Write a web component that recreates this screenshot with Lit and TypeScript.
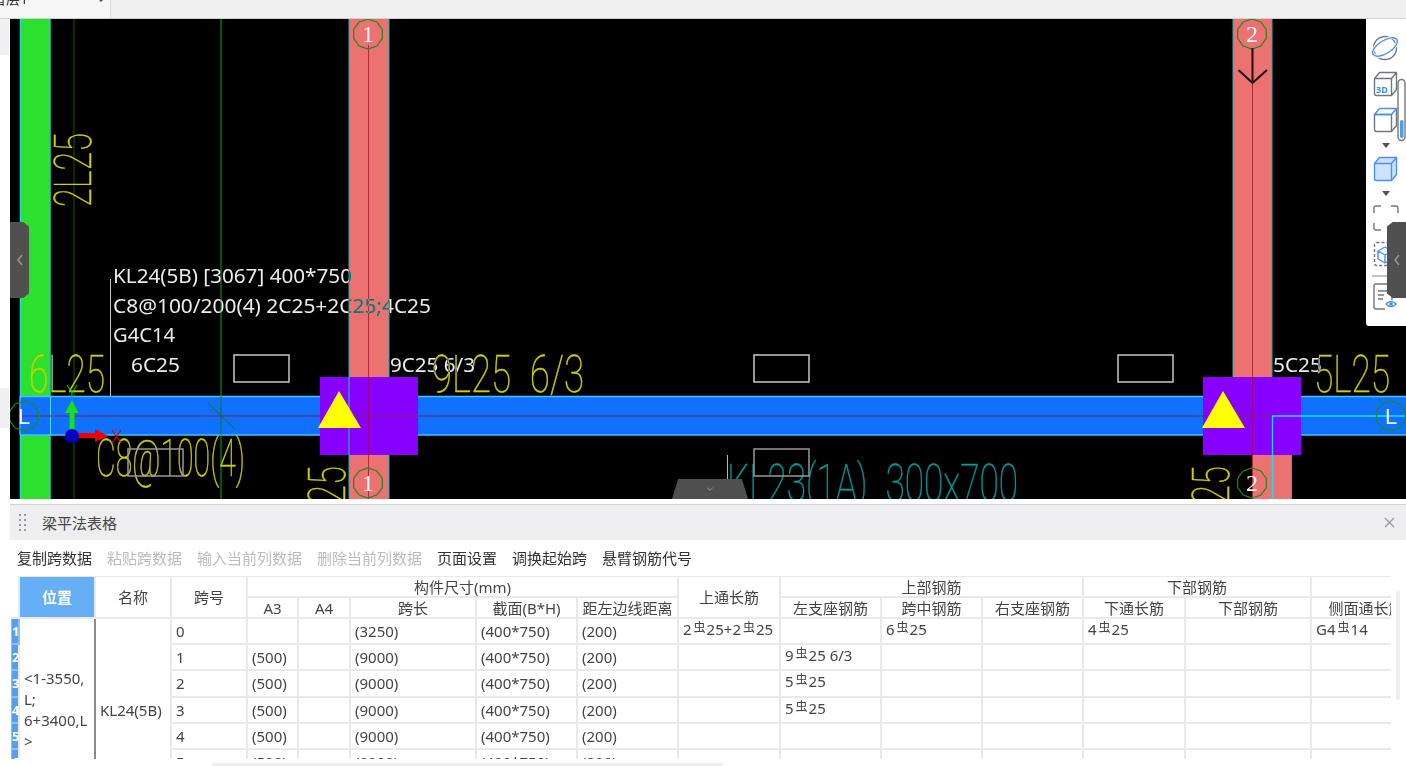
import { css, html, svg, LitElement } from "lit";
import { customElement } from "lit/decorators.js";

const REBAR = "虫";

const decagon = (cx: number, cy: number, r: number): string =>
  Array.from({ length: 10 }, (_, i) => {
    const a = (Math.PI / 5) * i + Math.PI / 10;
    return `${(cx + r * Math.cos(a)).toFixed(1)},${(cy + r * Math.sin(a)).toFixed(1)}`;
  }).join(" ");

const AXES = [
  { x: 368, y: 34, label: "1", serif: true },
  { x: 368, y: 483, label: "1", serif: true },
  { x: 1252, y: 34, label: "2", serif: true },
  { x: 1252, y: 483, label: "2", serif: true },
  { x: 24, y: 416, label: "L", serif: false },
  { x: 1391, y: 416, label: "L", serif: false },
];

const OPENINGS = [
  [234, 355],
  [754, 355],
  [1118, 355],
  [754, 449],
  [128, 449],
];

const NOTES = [
  { x: 113, y: 283, w: 239, t: "KL24(5B) [3067] 400*750" },
  { x: 113, y: 313, w: 318, t: "C8@100/200(4) 2C25+2C25;4C25" },
  { x: 113, y: 342, w: 62, t: "G4C14" },
  { x: 131, y: 372, w: 49, t: "6C25" },
  { x: 390, y: 372, w: 85, t: "9C25 6/3" },
  { x: 1273, y: 372, w: 49, t: "5C25" },
];

const MARKS = [
  { x: 29, y: 392, w: 76, t: "6L25" },
  { x: 96, y: 476, w: 149, t: "C8@100(4)" },
  { x: 432, y: 392, w: 152, t: "9L25 6/3" },
  { x: 1314, y: 392, w: 76, t: "5L25" },
];

const SIDE_MARKS = [
  { x: 91, y: 207, w: 74, t: "2L25" },
  { x: 345, y: 504, w: 38, t: "25" },
  { x: 1229, y: 504, w: 38, t: "25" },
];

@customElement("cad-canvas")
export class CadCanvas extends LitElement {
  static styles = css`
    :host {
      display: block;
      width: 100%;
      height: 100%;
    }
    svg {
      display: block;
      width: 100%;
      height: 100%;
    }
    text {
      font-family: "Roboto", "Liberation Sans", sans-serif;
    }
    .mark {
      fill: #cfcf00;
      stroke: #cfcf00;
      stroke-width: 0.5;
      font-size: 52px;
      font-weight: 100;
      word-spacing: 14px;
    }
    .teal {
      fill: #009a9a;
      stroke: #009a9a;
    }
    .note {
      fill: #ececec;
      font-family: "Noto Sans", "Liberation Sans", sans-serif;
      font-size: 20px;
      mix-blend-mode: difference;
    }
    .bubble {
      fill: none;
      stroke: #1c8a1c;
      stroke-width: 1.2;
    }
    .bubble-text {
      fill: #f4f4f4;
      font-size: 24px;
      text-anchor: middle;
      font-family: "Liberation Serif", serif;
    }
    .bubble-text.sans {
      font-family: "Liberation Sans", sans-serif;
      font-size: 22px;
    }
  `;

  render() {
    return html`<svg viewBox="10 19 1396 480" xmlns="http://www.w3.org/2000/svg">
      <rect x="10" y="19" width="1396" height="480" fill="#000" />

      <line x1="74" y1="19" x2="74" y2="499" stroke="#0b5c0b" />
      <line x1="221" y1="19" x2="221" y2="499" stroke="#0c8c0c" stroke-width="1.2" />

      <rect x="20" y="19" width="30" height="480" fill="#2ee02e" />
      <line x1="20.5" y1="19" x2="20.5" y2="499" stroke="#20e0d0" stroke-width="1.5" />
      <line x1="50.5" y1="19" x2="50.5" y2="499" stroke="#10a0a0" />

      <rect x="349" y="19" width="40" height="480" fill="#ec7272" />
      <rect x="1233" y="19" width="39" height="370" fill="#ec7272" />
      <rect x="1252" y="440" width="40" height="59" fill="#ec7272" />
      <path d="M349 19V499M389 19V499M1233 19V380M1272 19V380M1291.5 450V499" stroke="#12b8b8" fill="none" />

      ${SIDE_MARKS.map(
        (m) => svg`<text class="mark" transform="translate(${m.x} ${m.y}) rotate(-90)"
          textLength=${m.w} lengthAdjust="spacingAndGlyphs">${m.t}</text>`,
      )}
      ${MARKS.map(
        (m) => svg`<text class="mark" x=${m.x} y=${m.y} textLength=${m.w}
          lengthAdjust="spacingAndGlyphs">${m.t}</text>`,
      )}
      <line x1="727.5" y1="455" x2="727.5" y2="482" stroke="#cfcf00" />
      <text class="mark teal" x="727" y="501" textLength="291" lengthAdjust="spacingAndGlyphs">KL23(1A) 300x700</text>

      ${OPENINGS.map(
        ([x, y], i) => svg`<rect x=${x} y=${y} width="55" height="27" fill="none"
          stroke=${i > 2 ? "#999" : "#c8c8c8"} stroke-width="1.5" />`,
      )}
      <line x1="110.5" y1="279" x2="110.5" y2="396" stroke="#c8c8c8" />

      <rect x="20" y="396" width="1386" height="39" fill="#1070ff" />
      <path d="M20 396.5H1406M20 435H1406" stroke="#3fc4ff" stroke-width="1.5" fill="none" />
      <path d="M20 396V435M50.5 396V435" stroke="#58d8ff" fill="none" />
      <path d="M221 396V435M208 403L235 429" stroke="#0a7a0a" fill="none" />

      <rect x="320" y="377" width="98" height="78" fill="#8800ff" />
      <rect x="1203" y="377" width="98" height="78" fill="#8800ff" />
      <path d="M349 377V455" stroke="#20c8e8" />
      <path d="M20 416H1272" stroke="#7a2060" />
      <path d="M368.5 45V499M1252.5 84V499" stroke="#b02c38" fill="none" />
      <path d="M368.5 377V455M1252.5 377V455" stroke="#a00070" fill="none" />
      <path d="M1406 416H1272.5V499" stroke="#20dcf0" stroke-width="1.3" fill="none" />
      <polygon points="339,391 318,428 361,428" fill="#ffff00" />
      <polygon points="1223,391 1202,428 1245,428" fill="#ffff00" />

      ${NOTES.map(
        (n) => svg`<text class="note" x=${n.x} y=${n.y} textLength=${n.w}
          lengthAdjust="spacingAndGlyphs">${n.t}</text>`,
      )}

      ${AXES.map(
        (a) => svg`<polygon class="bubble" points=${decagon(a.x, a.y, 15)} />
          <text class="bubble-text ${a.serif ? "" : "sans"}" x=${a.x} y=${a.y + 8}>${a.label}</text>`,
      )}

      <path d="M1252.5 48V83" stroke="#220808" stroke-width="2" />
      <path d="M1238.5 70L1252.5 83L1267 70" stroke="#111" stroke-width="2" fill="none" />

      <!-- ucs -->
      <path d="M69.5 436V413H65L72 400L78.5 413H74.5V436Z" fill="#18e018" />
      <path d="M67 385L72 393L77 385M72 393V397" stroke="#18c018" fill="none" />
      <path d="M72 433H95V429L108 436L95 442V438H72Z" fill="#f00000" />
      <path d="M112 430L121 443M121 430L112 443" stroke="#e00000" stroke-width="1.3" />
      <circle cx="72" cy="436" r="7" fill="#0000c0" />
    </svg>`;
  }
}

@customElement("view-toolbar")
export class ViewToolbar extends LitElement {
  static styles = css`
    :host {
      display: block;
      position: absolute;
      top: 0;
      right: 0;
      width: 40px;
      height: 307px;
      background: #fff;
      border-bottom-left-radius: 3px;
    }
    svg {
      display: block;
      width: 40px;
      height: 307px;
    }
    .g {
      fill: none;
      stroke: #6f7882;
      stroke-width: 1.4;
      stroke-linejoin: round;
    }
    .b {
      fill: none;
      stroke: #4a90ee;
      stroke-width: 1.4;
      stroke-linejoin: round;
    }
    .b.solid {
      fill: #d0e2fb;
    }
    .tag {
      fill: #3f8ee8;
      font: 700 9px "Noto Sans", sans-serif;
    }
  `;

  render() {
    return html`<svg viewBox="1366 19 40 307" xmlns="http://www.w3.org/2000/svg">
      <circle cx="1385" cy="48" r="11.5" class="g" />
      <ellipse cx="1385" cy="47" rx="14" ry="6.5" transform="rotate(-32 1385 47)" fill="none" stroke="#fff" stroke-width="3" />
      <ellipse cx="1385" cy="47" rx="14" ry="6.5" transform="rotate(-32 1385 47)" class="b" />

      <path d="M1374.5 78.5h17v17h-15a2 2 0 0 1-2-2zM1374.5 78.5l5-6h17l-5 6M1396.5 72.5v17l-5 6" class="g" />
      <text class="tag" x="1376" y="93">3D</text>

      <path d="M1374.5 114.5h17v17h-15a2 2 0 0 1-2-2z" class="g" />
      <path d="M1391.5 131.5l5-6v-17" class="g" />
      <path d="M1374.5 114.5l5-6h17l-5 6z" class="b" />
      <polygon points="1382,143 1390,143 1386,148" fill="#555" />

      <path d="M1374.5 163.5l5-6h17v17l-5 6h-15a2 2 0 0 1-2-2z" class="b solid" />
      <path d="M1374.5 163.5h17v17M1391.5 163.5l5-6" class="b" />
      <polygon points="1382,191 1390,191 1386,196" fill="#555" />

      <path d="M1374 213v-5a2 2 0 0 1 2-2h5M1391 206h5a2 2 0 0 1 2 2v5M1398 223v5a2 2 0 0 1-2 2h-5M1381 230h-5a2 2 0 0 1-2-2v-5" class="g" />

      <rect x="1374.5" y="242.5" width="22" height="23" rx="2" stroke-dasharray="3 2" class="g" />
      <path d="M1385 247l7 4v8l-7 4l-7-4v-8zM1378 251l7 4l7-4M1385 255v8" class="b" />

      <line x1="1372" y1="276" x2="1400" y2="276" stroke="#8a8a8a" />

      <path d="M1392 300v-16h-16a2 2 0 0 0-2 2v21a2 2 0 0 0 2 2h9" class="g" />
      <path d="M1378 291h9M1378 295h6M1378 299h5" class="g" />
      <path d="M1386 304q5-5 10 0q-5 5-10 0z" class="b" />
      <circle cx="1391" cy="304" r="1.8" fill="#4a90ee" />

      <rect x="1398" y="79.5" width="7" height="61" rx="3.5" fill="#fff" stroke="#777" stroke-width="1.4" />
      <rect x="1400" y="120" width="3.5" height="18" rx="1.7" fill="#4a9cf5" />
    </svg>`;
  }
}

interface Row {
  a3: string;
  len: string;
  top?: unknown;
  left?: unknown;
  mid?: unknown;
  bottom?: unknown;
  side?: unknown;
}

const bar = (pre: string, post: string) =>
  html`${pre}<span class="rebar">${REBAR}</span>${post}`;

const ROWS: Row[] = [
  {
    a3: "",
    len: "(3250)",
    top: html`${bar("2", "25")}+${bar("2", "25")}`,
    mid: bar("6", "25"),
    bottom: bar("4", "25"),
    side: bar("G4", "14"),
  },
  { a3: "(500)", len: "(9000)", left: html`${bar("9", "25")} 6/3` },
  { a3: "(500)", len: "(9000)", left: bar("5", "25") },
  { a3: "(500)", len: "(9000)", left: bar("5", "25") },
  { a3: "(500)", len: "(9000)" },
  { a3: "(500)", len: "(9000)" },
  { a3: "(500)", len: "(9000)" },
];

const WIDTHS = [8, 76, 76, 76, 51, 52, 126, 101, 101, 102, 101, 101, 101, 102, 126, 110];

@customElement("beam-table")
export class BeamTable extends LitElement {
  static styles = css`
    :host {
      display: block;
      height: 183px;
      width: 1380px;
      margin-left: 1px;
      overflow: hidden;
      font-family: "Noto Sans", "Noto Sans CJK SC", sans-serif;
      font-size: 15px;
      color: #444;
    }
    table {
      table-layout: fixed;
      width: 1410px;
      margin: -1px 0 0 -1px;
      border-collapse: collapse;
    }
    th,
    td {
      border: 2px solid #e9e9e9;
      padding: 0;
      overflow: hidden;
      white-space: nowrap;
      box-sizing: border-box;
    }
    th {
      font-weight: 400;
      height: 21px;
      line-height: 18px;
      text-align: center;
    }
    td {
      height: 26.2px;
      line-height: 24px;
      padding-left: 4px;
    }
    td.bars {
      vertical-align: top;
      line-height: 21px;
    }
    .blank {
      border-top: 0;
      border-left: 0;
    }
    th.active {
      background: #66aef5;
      color: #fff;
      font-weight: 700;
    }
    td.no {
      background: #569fea;
      border-color: #8cc0f2;
      color: #fff;
      font-weight: 700;
      font-size: 13px;
      padding: 0;
      text-align: left;
      overflow: visible;
    }
    td.pos {
      white-space: normal;
      word-break: break-all;
      line-height: 21px;
      border-right: 2px solid #8a8a8a;
    }
    .rebar {
      font-size: 12px;
      vertical-align: 3px;
      margin: 0 1px 0 2px;
      line-height: 1;
    }
  `;

  render() {
    return html`<table>
      <colgroup>
        ${WIDTHS.map((w) => html`<col style="width:${w}px" />`)}
      </colgroup>
      <thead>
        <tr>
          <th class="blank" rowspan="2"></th>
          <th class="active" rowspan="2">位置</th>
          <th rowspan="2">名称</th>
          <th rowspan="2">跨号</th>
          <th colspan="5">构件尺寸(mm)</th>
          <th rowspan="2">上通长筋</th>
          <th colspan="3">上部钢筋</th>
          <th colspan="2">下部钢筋</th>
          <th></th>
        </tr>
        <tr>
          <th>A3</th>
          <th>A4</th>
          <th>跨长</th>
          <th>截面(B*H)</th>
          <th>距左边线距离</th>
          <th>左支座钢筋</th>
          <th>跨中钢筋</th>
          <th>右支座钢筋</th>
          <th>下通长筋</th>
          <th>下部钢筋</th>
          <th>侧面通长筋</th>
        </tr>
      </thead>
      <tbody>
        ${ROWS.map(
          (r, i) => html`<tr>
            <td class="no">${i + 1}</td>
            ${i === 0
              ? html`<td class="pos" rowspan="7">&lt;1-3550,<br />L;<br />6+3400,L<br />&gt;</td>
                  <td rowspan="7">KL24(5B)</td>`
              : ""}
            <td>${i}</td>
            <td>${r.a3}</td>
            <td></td>
            <td>${r.len}</td>
            <td>(400*750)</td>
            <td>(200)</td>
            <td class="bars">${r.top}</td>
            <td class="bars">${r.left}</td>
            <td class="bars">${r.mid}</td>
            <td></td>
            <td class="bars">${r.bottom}</td>
            <td></td>
            <td class="bars">${r.side}</td>
          </tr>`,
        )}
      </tbody>
    </table>`;
  }
}

@customElement("app-root")
export class AppRoot extends LitElement {
  static styles = css`
    :host {
      display: flex;
      flex-direction: column;
      width: 1406px;
      height: 766px;
      overflow: hidden;
      background: #fff;
      font-family: "Noto Sans", "Noto Sans CJK SC", sans-serif;
    }
    .topbar {
      flex: 0 0 19px;
      box-sizing: border-box;
      display: flex;
      background: #f0f0f0;
      border-bottom: 1px solid #d0d0d0;
      overflow: hidden;
    }
    .floor {
      width: 111px;
      box-sizing: border-box;
      background: #f6f6f6;
      border-right: 1px solid #dcdcdc;
      display: flex;
      justify-content: space-between;
      align-items: flex-start;
      color: #333;
      font-size: 14px;
      line-height: 16px;
      padding-right: 6px;
    }
    .floor span {
      margin: -9px 0 0 -8px;
    }
    .floor i {
      width: 0;
      height: 0;
      border: 3px solid transparent;
      border-top-color: #555;
      border-bottom: 0;
      margin-top: -1px;
    }
    .main {
      flex: 0 0 480px;
      display: flex;
    }
    .rail {
      flex: 0 0 10px;
      display: flex;
      flex-direction: column;
    }
    .rail b {
      display: block;
      width: 9px;
    }
    .rail .tone {
      height: 36px;
      background: #f0f0f2;
    }
    .rail .gap {
      height: 333px;
    }
    .rail .tone.low {
      height: 40px;
    }
    .stage {
      flex: 1;
      position: relative;
      overflow: hidden;
    }
    .handle {
      position: absolute;
      top: 203px;
      width: 19px;
      height: 76px;
      background: #505050;
      display: flex;
      align-items: center;
      justify-content: center;
    }
    .handle svg {
      width: 8px;
      height: 12px;
    }
    .handle.left {
      left: 0;
      clip-path: polygon(0 0, 70% 0, 100% 6%, 100% 94%, 70% 100%, 0 100%);
    }
    .handle.right {
      right: 0;
      clip-path: polygon(30% 0, 100% 0, 100% 100%, 30% 100%, 0 94%, 0 6%);
    }
    .handle.bottom {
      top: auto;
      bottom: 0;
      left: 662px;
      width: 76px;
      height: 20px;
      clip-path: polygon(8% 0, 92% 0, 100% 100%, 0 100%);
    }
    .handle path {
      fill: none;
      stroke: #999;
      stroke-width: 1.4;
    }
    .panel {
      flex: 1;
      margin-top: 5px;
      margin-left: 10px;
      position: relative;
      min-height: 0;
      display: flex;
      flex-direction: column;
    }
    .title {
      flex: 0 0 36px;
      box-sizing: border-box;
      display: flex;
      align-items: center;
      padding: 0 11px 0 9px;
      background: #eeeef0;
      border-top: 1px solid #d4d4d4;
      color: #444;
      font-size: 15px;
    }
    .grip {
      display: grid;
      grid-template-columns: 2px 2px;
      gap: 3px;
      margin-right: 16px;
    }
    .grip u {
      width: 2px;
      height: 2px;
      background: #999;
    }
    .title .name {
      flex: 1;
    }
    .close {
      width: 11px;
      height: 11px;
    }
    .tools {
      flex: 0 0 36px;
      box-sizing: border-box;
      display: flex;
      align-items: center;
      gap: 15px;
      padding: 0 0 1px 7px;
      font-size: 15px;
      color: #333;
    }
    .tools .off {
      color: #bcbcbc;
    }
    .vbar {
      position: absolute;
      top: 87px;
      right: 6px;
      width: 4px;
      height: 109px;
      border-radius: 2px;
      background: #eeeeee;
    }
    .hbar {
      position: absolute;
      left: 202px;
      bottom: 0;
      width: 511px;
      height: 3px;
      background: #eeeeee;
    }
  `;

  render() {
    return html`
      <div class="topbar">
        <div class="floor"><span>首层1</span><i></i></div>
      </div>
      <div class="main">
        <div class="rail">
          <b class="tone"></b><b class="gap"></b><b class="tone low"></b>
        </div>
        <div class="stage">
          <cad-canvas></cad-canvas>
          <view-toolbar></view-toolbar>
          <div class="handle left">
            <svg viewBox="0 0 8 12"><path d="M6 1L2 6L6 11" /></svg>
          </div>
          <div class="handle right">
            <svg viewBox="0 0 8 12"><path d="M6 1L2 6L6 11" /></svg>
          </div>
          <div class="handle bottom">
            <svg viewBox="0 0 12 8"><path d="M2 2L6 6L10 2" /></svg>
          </div>
        </div>
      </div>
      <div class="panel">
        <div class="title">
          <div class="grip">
            ${Array.from({ length: 8 }, () => html`<u></u>`)}
          </div>
          <span class="name">梁平法表格</span>
          <svg class="close" viewBox="0 0 11 11">
            <path d="M1 1L10 10M10 1L1 10" stroke="#999" stroke-width="1.3" />
          </svg>
        </div>
        <div class="tools">
          <span>复制跨数据</span>
          <span class="off">粘贴跨数据</span>
          <span class="off">输入当前列数据</span>
          <span class="off">删除当前列数据</span>
          <span>页面设置</span>
          <span>调换起始跨</span>
          <span>悬臂钢筋代号</span>
        </div>
        <beam-table></beam-table>
        <div class="vbar"></div>
        <div class="hbar"></div>
      </div>
    `;
  }
}
